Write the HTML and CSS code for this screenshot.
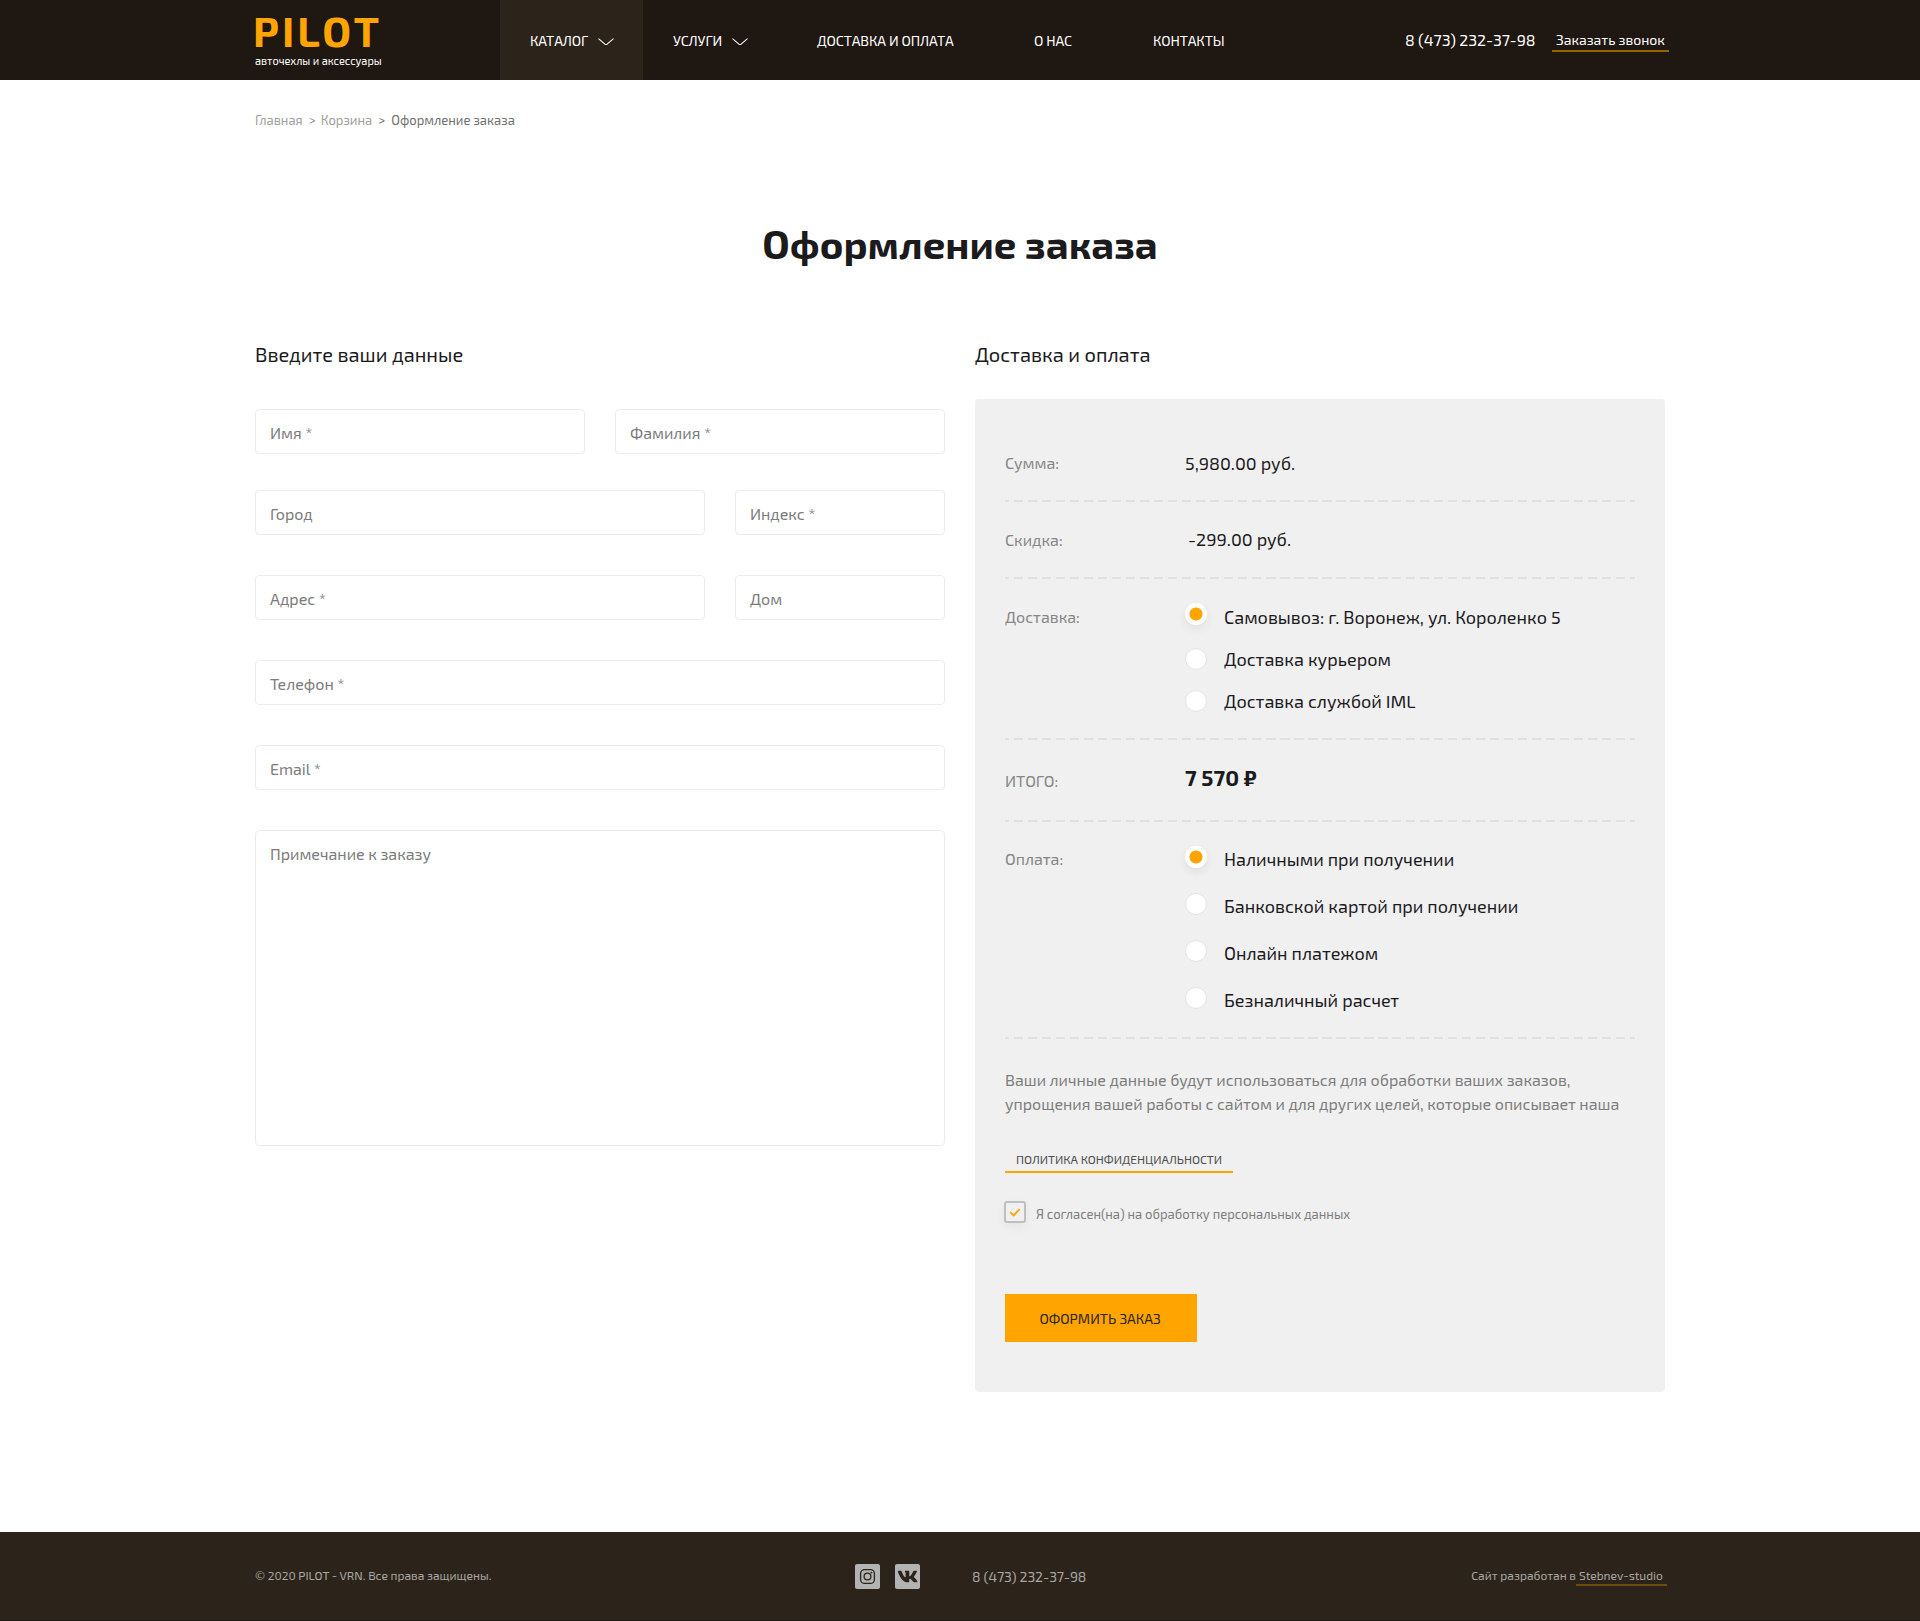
FILE: index.html
```html
<!DOCTYPE html>
<html lang="ru">
<head>
<meta charset="utf-8">
<title>Оформление заказа</title>
<link rel="stylesheet" href="styles.css">
</head>
<body>
<header class="header">
  <div class="container header__inner">
    <a class="logo" href="#">
      <span class="logo__name">PILOT</span>
      <span class="logo__tagline">авточехлы и аксессуары</span>
    </a>
    <nav class="nav">
      <a class="nav__item nav__item--active" href="#"><span class="nav__text">КАТАЛОГ</span>
        <svg class="nav__arrow" viewBox="0 0 16 8"><path d="M.5 .6 6.9 6.1Q8 7 9.1 6.1L15.5 .6"/></svg></a>
      <a class="nav__item nav__item--drop" href="#"><span class="nav__text">УСЛУГИ</span>
        <svg class="nav__arrow" viewBox="0 0 16 8"><path d="M.5 .6 6.9 6.1Q8 7 9.1 6.1L15.5 .6"/></svg></a>
      <a class="nav__item" href="#"><span class="nav__text">ДОСТАВКА И ОПЛАТА</span></a>
      <a class="nav__item" href="#"><span class="nav__text">О НАС</span></a>
      <a class="nav__item" href="#"><span class="nav__text">КОНТАКТЫ</span></a>
    </nav>
    <div class="contacts">
      <a class="contacts__phone" href="#">8 (473) 232-37-98</a>
      <a class="contacts__call" href="#">Заказать звонок</a>
    </div>
  </div>
</header>

<main class="container main">
  <div class="breadcrumbs">
    <a href="#">Главная</a><span class="breadcrumbs__sep">&gt;</span><a href="#">Корзина</a><span class="breadcrumbs__sep breadcrumbs__sep--last">&gt;</span><span class="breadcrumbs__current">Оформление заказа</span>
  </div>
  <h1 class="title">Оформление заказа</h1>
  <div class="columns">
    <section>
      <h2 class="subtitle">Введите ваши данные</h2>
      <div class="form">
        <div class="form__row form__row--half"><div class="field">Имя *</div><div class="field">Фамилия *</div></div>
        <div class="form__row form__row--wide"><div class="field">Город</div><div class="field">Индекс *</div></div>
        <div class="form__row form__row--wide"><div class="field">Адрес *</div><div class="field">Дом</div></div>
        <div class="field">Телефон *</div>
        <div class="field">Email *</div>
        <div class="field field--area">Примечание к заказу</div>
      </div>
    </section>
    <section>
      <h2 class="subtitle">Доставка и оплата</h2>
      <div class="panel">
        <div class="row row--first"><span class="row__label">Сумма:</span><span>5,980.00 руб.</span></div>
        <div class="row row--discount"><span class="row__label">Скидка:</span><span class="row__value--minus">-299.00 руб.</span></div>
        <div class="row row--delivery">
          <span class="row__label">Доставка:</span>
          <div class="options">
            <div class="option option--first"><i class="radio radio--on"></i><span class="option__text">Самовывоз: г. Воронеж, ул. Короленко 5</span></div>
            <div class="option"><i class="radio"></i><span class="option__text">Доставка курьером</span></div>
            <div class="option"><i class="radio"></i><span class="option__text">Доставка службой IML</span></div>
          </div>
        </div>
        <div class="row row--total"><span class="row__label">ИТОГО:</span><strong class="row__total">7 570 ₽</strong></div>
        <div class="row row--payment">
          <span class="row__label">Оплата:</span>
          <div class="options options--loose">
            <div class="option"><i class="radio radio--on"></i><span class="option__text">Наличными при получении</span></div>
            <div class="option"><i class="radio"></i><span class="option__text">Банковской картой при получении</span></div>
            <div class="option"><i class="radio"></i><span class="option__text">Онлайн платежом</span></div>
            <div class="option"><i class="radio"></i><span class="option__text">Безналичный расчет</span></div>
          </div>
        </div>
        <p class="privacy">Ваши личные данные будут использоваться для обработки ваших заказов,<br>упрощения вашей работы с сайтом и для других целей, которые описывает наша</p>
        <a class="policy" href="#">ПОЛИТИКА КОНФИДЕНЦИАЛЬНОСТИ</a>
        <div class="agree">
          <span class="checkbox"><svg class="checkbox__mark" viewBox="0 0 12 9"><path d="M1.2 4.2 4.6 7.4 10.6 1.2"/></svg></span>
          <span>Я согласен(на) на обработку персональных данных</span>
        </div>
        <button class="submit" type="button">ОФОРМИТЬ ЗАКАЗ</button>
      </div>
    </section>
  </div>
</main>

<footer class="footer">
  <div class="container footer__inner">
    <span class="footer__copy">© 2020 PILOT - VRN. Все права защищены.</span>
    <div class="social">
      <a class="social__link" href="#"><svg class="social__icon" viewBox="0 0 25 25"><rect class="social__line" x="5.6" y="5.6" width="13.8" height="13.8" rx="4"/><circle class="social__line" cx="12.5" cy="12.5" r="3.4"/><circle class="social__fill" cx="16.5" cy="8.6" r=".9"/></svg></a>
      <a class="social__link" href="#"><svg class="social__icon" viewBox="0 0 25 25"><path class="social__fill" transform="translate(2.2 3.3) scale(.0362 .036)" d="M545 117.7c3.7-12.5 0-21.7-17.8-21.7h-58.9c-15 0-21.9 7.9-25.6 16.7 0 0-30 73.1-72.4 120.5-13.7 13.7-20 18.1-27.5 18.1-3.7 0-9.4-4.4-9.4-16.9V117.7c0-15-4.2-21.7-16.6-21.7h-92.6c-9.4 0-15 7-15 13.5 0 14.2 21.2 17.5 23.4 57.5v86.8c0 19-3.4 22.5-10.9 22.5-20 0-68.6-73.4-97.4-157.4-5.8-16.3-11.5-22.9-26.6-22.9H38.8c-16.8 0-20.2 7.9-20.2 16.7 0 15.6 20 93.1 93.1 195.5C160.4 378.1 229 416 291.4 416c37.5 0 42.1-8.4 42.1-22.9 0-66.8-3.4-73.1 15.4-73.1 8.7 0 23.7 4.4 58.7 38.1 40 40 46.6 57.9 69 57.9h58.9c16.8 0 25.3-8.4 20.4-25-11.2-34.9-86.9-106.7-90.3-111.5-8.7-11.2-6.2-16.2 0-26.2.1-.1 72-101.3 79.4-135.6z"/></svg></a>
    </div>
    <a class="footer__phone" href="#">8 (473) 232-37-98</a>
    <div class="credits"><span>Сайт разработан в</span><a class="credits__link" href="#">Stebnev-studio</a></div>
  </div>
</footer>
</body>
</html>
```
FILE: styles.css
```css
* { box-sizing: border-box; }

body {
  margin: 0;
  background: #fff;
  color: #1b1a1d;
  font-family: "Exo 2", Roboto, "Liberation Sans", sans-serif;
}

a { color: inherit; text-decoration: none; }

.container { width: 1410px; margin: 0 auto; }

/* Header */
.header { height: 80px; background: #1f1711; color: #fff; }
.header__inner { display: flex; height: 100%; }

.logo { width: 245px; padding-top: 6px; }
.logo__name {
  display: block;
  margin-left: -2px;
  font-size: 42px;
  font-weight: 700;
  line-height: 48px;
  letter-spacing: 3px;
  color: #ffa400;
}
.logo__tagline {
  display: block;
  font-size: 11px;
  line-height: 14px;
}

.nav {
  display: grid;
  grid-template-columns: 143px 174px 217px 119px auto;
  font-size: 14px;
}
.nav__item { display: flex; align-items: center; gap: 10px; }
.nav__item--active { padding-left: 30px; background: #2c241a; }
.nav__item--drop { padding-left: 30px; }
.nav__text { padding-top: 1px; letter-spacing: -.09px; white-space: nowrap; }
.nav__arrow {
  width: 16px;
  height: 8px;
  margin-top: 3px;
  fill: none;
  stroke: #fff;
  stroke-width: 1.1;
}

.contacts { display: flex; margin: 0 -4px 0 auto; white-space: nowrap; }
.contacts__phone {
  width: 147px;
  padding-top: 30px;
  font-size: 16px;
  line-height: 20px;
  letter-spacing: -.08px;
}
.contacts__call {
  width: 117px;
  height: 52px;
  padding: 30px 0 0 4px;
  border-bottom: 2px solid #976200;
  font-size: 14px;
  line-height: 20px;
}

/* Page heading */
.main { padding: 32px 0 140px; }
.breadcrumbs {
  display: flex;
  font-size: 13px;
  line-height: 16px;
  color: #a0a0a0;
}
.breadcrumbs__sep { width: 18px; padding-left: 6px; color: #8a8a8a; }
.breadcrumbs__sep--last { width: 19px; color: #6f6f6f; }
.breadcrumbs__current { color: #6f6f6f; }

.title {
  margin: 91px 0 75px;
  font-size: 40px;
  line-height: 48px;
  text-align: center;
}

.columns { display: grid; grid-template-columns: 690px 690px; gap: 30px; }
.subtitle { margin: 0; font-size: 20px; font-weight: 400; line-height: 24px; }

/* Customer form */
.form { display: flex; flex-direction: column; gap: 40px; margin-top: 43px; }
.form__row { display: grid; gap: 30px; }
.form__row--half { grid-template-columns: 1fr 1fr; margin-bottom: -4px; }
.form__row--wide { grid-template-columns: 450px 210px; }
.field {
  height: 45px;
  padding: 11px 14px;
  border: 1px solid #ebebeb;
  border-radius: 4px;
  font-size: 16px;
  line-height: 24px;
  color: #7b7b7b;
}
.field--area { height: 316px; }

/* Order panel */
.panel {
  height: 993px;
  margin-top: 33px;
  padding: 0 30px;
  border-radius: 4px;
  background: #f0f0f0;
}
.row {
  display: grid;
  grid-template-columns: 180px 1fr;
  padding-top: 26px;
  background: repeating-linear-gradient(90deg, #e1e1e1 0 4.5px, transparent 4.5px 9.5px, #e1e1e1 9.5px 14px) bottom left / 100% 2px no-repeat;
  font-size: 18px;
  line-height: 24px;
}
.row--first { height: 103px; padding-top: 52px; }
.row--discount { height: 77px; }
.row--delivery { height: 161px; }
.row--total { height: 82px; padding-top: 29px; }
.row--payment { height: 217px; padding-top: 25px; }
.row__label { font-size: 16px; color: #868686; }
.row__value--minus { margin: -1px 0 0 3px; }
.row__total { margin-top: -4px; font-size: 22px; }

.options { display: flex; flex-direction: column; gap: 18px; }
.options--loose { gap: 23px; }
.option { display: flex; gap: 17px; }
.option__text { white-space: nowrap; }

.radio {
  flex: none;
  width: 22px;
  height: 22px;
  margin-top: 1px;
  border: 1px solid #e4e4e4;
  border-radius: 50%;
  background: #fff;
}
.options--loose .radio { margin-top: -1px; }
.radio--on {
  border: 0;
  background: radial-gradient(circle, #ffa400 6.2px, #fff 6.8px);
  box-shadow: 0 4px 10px rgba(0, 0, 0, .07);
}
.option--first .radio { margin-top: -2px; }

.privacy {
  margin: 29px 0 35px;
  font-size: 16px;
  line-height: 24px;
  color: #7d7d7d;
  white-space: nowrap;
}
.policy {
  display: block;
  width: 228px;
  height: 22px;
  padding-left: 11px;
  border-bottom: 2px solid #ffa400;
  font-size: 12px;
  line-height: 16px;
  color: #4f4f4f;
  white-space: nowrap;
}
.agree {
  display: flex;
  gap: 10px;
  margin: 28px 0 71px -1px;
  font-size: 13px;
  line-height: 26px;
  height: 22px;
  color: #7d7d7d;
}
.checkbox {
  display: flex;
  align-items: center;
  justify-content: center;
  width: 22px;
  height: 22px;
  border: 2px solid #bfbfbf;
  border-radius: 3px;
  box-shadow: 0 4px 10px rgba(0, 0, 0, .05);
}
.checkbox__mark { width: 12px; height: 9px; fill: none; stroke: #ffa400; stroke-width: 1.8; }
.submit {
  display: block;
  width: 192px;
  height: 48px;
  padding: 0 2px 0 0;
  border: 0;
  background: #ffa400;
  color: #2c241a;
  font-family: inherit;
  font-size: 14px;
}

/* Footer */
.footer {
  height: 89px;
  border-bottom: 1px solid #1f1711;
  background: #2c241a;
  color: #a9a7a4;
  font-size: 12px;
  line-height: 16px;
}
.footer__inner { display: flex; padding-top: 32px; white-space: nowrap; }
.footer__copy { width: 600px; padding-top: 3px; }
.social { display: flex; gap: 15px; width: 117px; }
.social__link { width: 25px; height: 25px; border-radius: 2px; background: #b3b3b3; }
.social__icon { display: block; width: 25px; height: 25px; }
.social__line { fill: none; stroke: #2c241a; stroke-width: 1.3; }
.social__fill { fill: #2c241a; }
.footer__phone { padding-top: 5px; font-size: 14px; letter-spacing: -.06px; }
.credits { display: flex; margin: 0 -2px 0 auto; padding-top: 3px; }
.credits__link {
  width: 91px;
  height: 19px;
  padding-left: 3px;
  border-bottom: 2px solid #6f4a10;
}
```
